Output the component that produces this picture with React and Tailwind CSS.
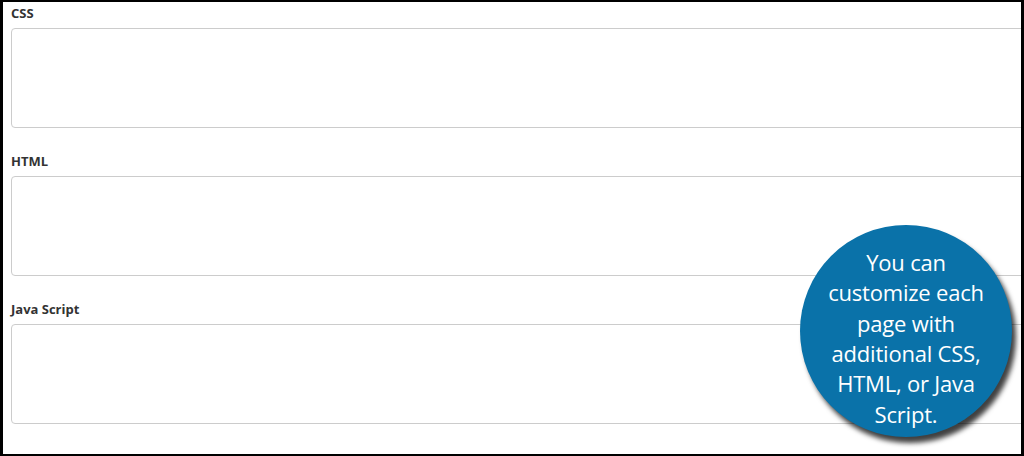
export default function App() {
  const sections = ["CSS", "HTML", "Java Script"];
  return (
    <div className="w-[1024px] h-[456px] bg-black pl-[3px] pr-[3px] pt-[2px] pb-[2px]">
      <div className="relative w-full h-full bg-white overflow-hidden">
        <div className="flex flex-col pl-[8px] pt-[2px] gap-[24px]">
          {sections.map((s) => (
            <div key={s} className="flex flex-col">
              <div className="text-[13px] leading-[18px] font-bold text-[#333333] mb-[6px]" style={{ fontFamily: '"Open Sans", sans-serif' }}>
                {s}
              </div>
              <div className="w-[1040px] h-[100px] rounded-[4px] border border-[#cccccc] bg-white shrink-0" />
            </div>
          ))}
        </div>
        <div className="absolute left-[797px] top-[223px] w-[212px] h-[212px] rounded-full bg-[#0a72a9] shadow-[4px_6px_5px_rgba(0,0,0,0.75)] flex items-center justify-center">
          <div className="text-white text-center text-[22px] leading-[30.4px] pt-[14px] tracking-[-0.2px]" style={{ fontFamily: '"Open Sans", sans-serif' }}>
            You can<br />customize each<br />page with<br />additional CSS,<br />HTML, or Java<br />Script.
          </div>
        </div>
      </div>
    </div>
  );
}
